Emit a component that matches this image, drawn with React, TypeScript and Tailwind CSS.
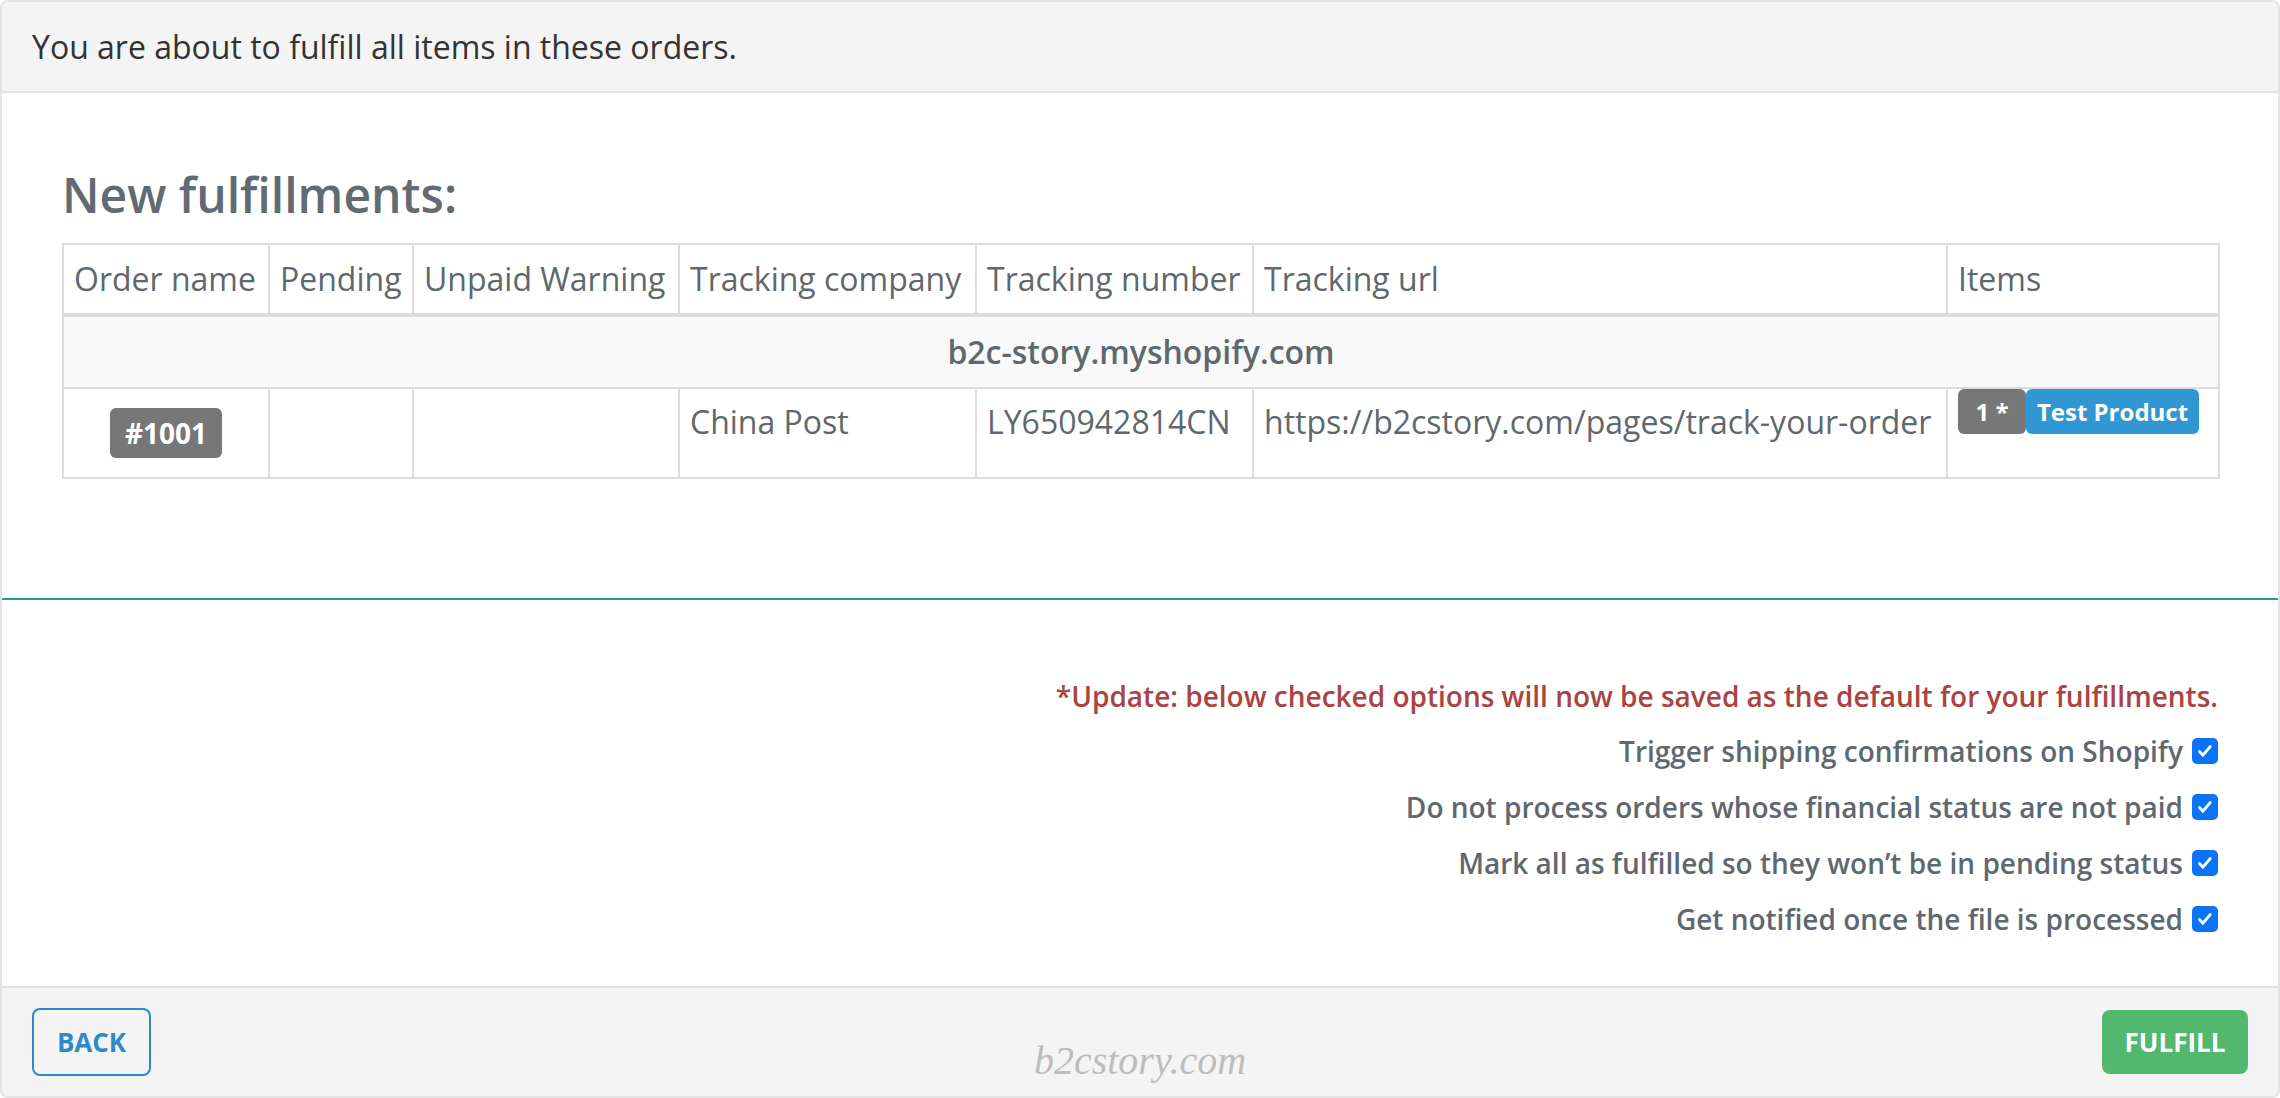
import React from 'react';

const cols = [206, 144, 266, 297, 277, 694, 272];
const headers = ['Order name', 'Pending', 'Unpaid Warning', 'Tracking company', 'Tracking number', 'Tracking url', 'Items'];

const options = [
  'Trigger shipping confirmations on Shopify',
  'Do not process orders whose financial status are not paid',
  'Mark all as fulfilled so they won\u2019t be in pending status',
  'Get notified once the file is processed',
];

const CheckBox: React.FC = () => (
  <span className="ml-[9px] inline-flex h-[26px] w-[26px] shrink-0 items-center justify-center rounded-[5px] bg-[#0b74f4]">
    <svg width="18" height="18" viewBox="0 0 16 16" fill="none">
      <path d="M3.2 8.6l3 3.1 6.4-7.6" stroke="#fff" strokeWidth="2.6" strokeLinecap="round" strokeLinejoin="round" />
    </svg>
  </span>
);

const App: React.FC = () => {
  return (
    <div className="h-[1098px] w-[2280px] bg-white font-['Open_Sans',sans-serif]">
      <div className="flex h-full flex-col overflow-hidden rounded-[8px] border-2 border-[#e3e3e3]">
        {/* top notice */}
        <div className="flex h-[91px] shrink-0 items-center border-b-2 border-[#e3e3e3] bg-[#f4f4f4] px-[30px] text-[32px] text-[#333]">
          You are about to fulfill all items in these orders.
        </div>

        <div className="flex flex-1 flex-col">
          <div className="px-[60px] pt-[75px]">
            <h3 className="text-[48px] font-semibold leading-[53px] text-[#626b71]">New fulfillments:</h3>
            <table className="mt-[22px] w-[2156px] table-fixed border-collapse text-[32px] leading-[46px] text-[#5e686d]">
              <colgroup>
                {cols.map((w, i) => (
                  <col key={i} style={{ width: w }} />
                ))}
              </colgroup>
              <thead>
                <tr>
                  {headers.map(h => (
                    <th key={h} className="border-2 border-b-4 border-[#dddddd] px-[10px] py-[11px] text-left font-normal whitespace-nowrap">
                      {h}
                    </th>
                  ))}
                </tr>
              </thead>
              <tbody>
                <tr>
                  <td colSpan={7} className="border-2 border-[#dddddd] bg-[#f9f9f9] py-[12px] text-center font-semibold">
                    b2c-story.myshopify.com
                  </td>
                </tr>
                <tr>
                  <td className="border-2 border-[#dddddd] p-0 align-middle">
                    <div className="flex h-[88px] items-center justify-center">
                      <span className="inline-flex h-[50px] items-center rounded-[6px] bg-[#777777] px-[15px] text-[28px] font-bold text-white">#1001</span>
                    </div>
                  </td>
                  <td className="border-2 border-[#dddddd]" />
                  <td className="border-2 border-[#dddddd]" />
                  <td className="border-2 border-[#dddddd] px-[10px] pt-[10px] align-top">China Post</td>
                  <td className="border-2 border-[#dddddd] px-[10px] pt-[10px] align-top">LY650942814CN</td>
                  <td className="border-2 border-[#dddddd] px-[10px] pt-[10px] align-top whitespace-nowrap">https://b2cstory.com/pages/track-your-order</td>
                  <td className="border-2 border-[#dddddd] px-[10px] pt-0 align-top">
                    <div className="flex">
                      <span className="inline-flex h-[45px] w-[68px] items-center justify-center rounded-[6px] bg-[#777777] text-[24px] font-bold text-white">1 *</span>
                      <span className="inline-flex h-[45px] w-[173px] items-center justify-center rounded-[6px] bg-[#3097d3] text-[24px] font-bold text-white">Test Product</span>
                    </div>
                  </td>
                </tr>
              </tbody>
            </table>
          </div>

          <div className="mt-[119px] h-[2px] w-full bg-[#19a097]" />

          <div className="flex flex-col items-end px-[60px] pt-[76px]">
            <p className="mb-[7px] text-[28px] font-semibold leading-[40px] text-[#a94442]">
              *Update: below checked options will now be saved as the default for your fulfillments.
            </p>
            {options.map(o => (
              <label key={o} className="flex h-[56px] items-center text-[28px] font-semibold leading-[40px] text-[#5f686e]">
                <span>{o}</span>
                <CheckBox />
              </label>
            ))}
          </div>
        </div>

        {/* footer */}
        <div className="relative flex h-[110px] shrink-0 items-center justify-between border-t-2 border-[#e3e3e3] bg-[#f4f4f4] px-[30px]">
          <button className="flex h-[68px] w-[119px] items-center justify-center rounded-[8px] border-2 border-[#2d8ac7] text-[26px] font-bold text-[#2d8ac7]">
            BACK
          </button>
          <span className="pointer-events-none absolute left-1/2 top-[53px] -translate-x-1/2 font-['Liberation_Serif',serif] text-[40px] italic leading-[40px] text-[#bdbdbd]">
            b2cstory.com
          </span>
          <button className="flex h-[64px] w-[146px] items-center justify-center rounded-[8px] bg-[#52b86f] text-[26px] font-bold text-white">
            FULFILL
          </button>
        </div>
      </div>
    </div>
  );
};

export default App;
